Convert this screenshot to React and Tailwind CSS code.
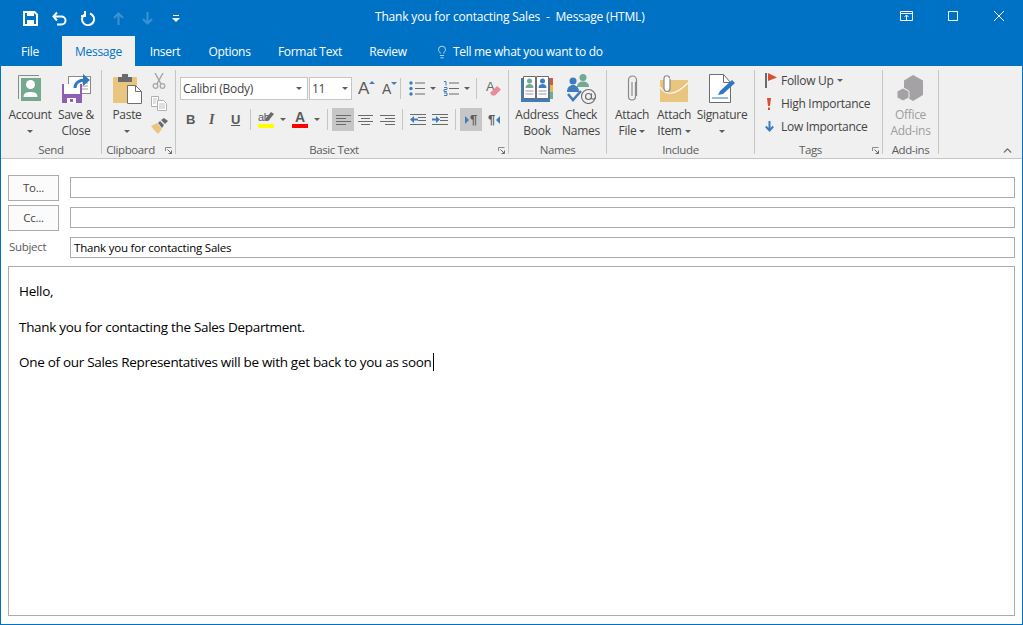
import { ChevronUp, Lightbulb } from "lucide-react";

const Caret = ({ className = "" }) => (
  <svg width="6" height="3" viewBox="0 0 6 3" className={`shrink-0 ${className}`}>
    <path d="M0 0h6L3 3z" fill="#5e5e5e" />
  </svg>
);

function Launcher() {
  return (
    <svg width="7" height="7" viewBox="0 0 7 7" className="absolute right-[3px] bottom-0">
      <path d="M.5 4V.5H6.500" fill="none" stroke="#8a8a8a" />
      <path d="M2.500 2.500l4 4M6.500 3.500v3h-3" fill="none" stroke="#6a6a6a" />
    </svg>
  );
}

function Group({ className, contentClass = "justify-center", labelClass = "", label, launcher, children }) {
  return (
    <div className={`relative flex h-[84px] shrink-0 flex-col border-r border-[#c6c6c6] ${className}`}>
      <div className={`flex h-[74px] shrink-0 items-start ${contentClass}`}>{children}</div>
      <div className={`flex h-[12px] shrink-0 items-center justify-center text-[11.5px] leading-none tracking-[-0.4px] text-[#5c5c5c] ${labelClass}`}>{label}</div>
      {launcher && <Launcher />}
    </div>
  );
}

function LargeButton({ className, icon, lines, caret, caretInline, disabled }) {
  return (
    <div className={`flex shrink-0 flex-col items-center ${disabled ? "text-[#9d9d9d]" : "text-[#444444]"} ${className}`}>
      <div className="flex h-[37px] w-full items-center justify-center">{icon}</div>
      <div className="whitespace-nowrap text-center text-[12px] leading-[16px]">{lines[0]}</div>
      <div className="flex h-[16px] items-center justify-center gap-[3px] whitespace-nowrap text-[12px] leading-[16px]">
        {lines[1]}
        {caretInline && <Caret />}
        {caret && <Caret />}
      </div>
    </div>
  );
}

const AccountIcon = () => (
  <svg width="24" height="27" viewBox="0 0 24 27">
    <path d="M.5 24V.5H21" fill="none" stroke="#8b8b8b" />
    <rect x="3" y="3" width="20" height="23" fill="#75a890" />
    <circle cx="12.500" cy="9.500" r="4.500" fill="#fff" />
    <path d="M5.500 22c0-4 3-5 7-5s7 1 7 5z" fill="#fff" />
  </svg>
);

const SaveCloseIcon = () => (
  <svg width="29" height="29" viewBox="0 0 29 29">
    <rect x="6.500" y="2.500" width="22" height="17" fill="#fff" stroke="#8b8b8b" />
    <path d="M20 9h6M20 12h6M20 15h6" stroke="#a0a0a0" />
    <rect x="0" y="10" width="20" height="19" fill="#8e5fb3" />
    <rect x="2" y="10" width="16" height="10" fill="#fff" />
    <rect x="5" y="24" width="9" height="5" fill="#fff" />
    <rect x="8" y="25" width="3" height="3" fill="#8e5fb3" />
    <path d="M13 14c0-5 4-8 10-8" fill="none" stroke="#2f78bd" strokeWidth="3" />
    <path d="M21 0l7 6-7 6z" fill="#2f78bd" />
  </svg>
);

const PasteIcon = () => (
  <svg width="29" height="30" viewBox="0 0 29 30">
    <path d="M1 3h22a1 1 0 0 1 1 1v25H1a1 1 0 0 1-1-1V4a1 1 0 0 1 1-1z" fill="#eac57f" />
    <path d="M5 3h14v5H5z" fill="#6b6b6b" />
    <rect x="9" y="0" width="6" height="5" fill="#6b6b6b" />
    <path d="M14.500 11.500h8l6 6v12h-14z" fill="#fff" stroke="#6f6f6f" />
    <path d="M22.500 11.500v6h6" fill="none" stroke="#6f6f6f" />
  </svg>
);

const CutIcon = () => (
  <svg width="14" height="16" viewBox="0 0 14 16">
    <path d="M3 0l6 11M11 0L5 11" stroke="#a8a8a8" strokeWidth="1.500" />
    <circle cx="3.500" cy="13" r="2.300" fill="none" stroke="#a8a8a8" strokeWidth="1.300" />
    <circle cx="10.500" cy="13" r="2.300" fill="none" stroke="#a8a8a8" strokeWidth="1.300" />
  </svg>
);

const CopyIcon = () => (
  <svg width="16" height="15" viewBox="0 0 16 15">
    <path d="M.5.5h7v10h-7z" fill="#fff" stroke="#b0b0b0" />
    <path d="M6.500 4.500h6l3 3v7h-9z" fill="#fff" stroke="#b0b0b0" />
    <path d="M8 8h6M8 10h6M8 12h6M2 3h4M2 5h3M2 7h3" stroke="#c0c0c0" />
  </svg>
);

const PainterIcon = () => (
  <svg width="17" height="16" viewBox="0 0 17 16">
    <path d="M0 8l6-3 5 6-4 5c-2-2-5-5-7-8z" fill="#eac57f" />
    <path d="M7 5l2-2 4 4-2 3z" fill="#6b6b6b" />
    <path d="M10 2l3-2 4 3-3 3z" fill="#6b6b6b" />
  </svg>
);

const AddressBookIcon = () => (
  <svg width="32" height="28" viewBox="0 0 32 28">
    <rect x="29" y="3" width="3" height="7" fill="#d9593d" />
    <rect x="29" y="10" width="3" height="7" fill="#eab54b" />
    <rect x="29" y="17" width="3" height="7" fill="#75a890" />
    <path d="M0 3h29v24H0z" fill="#3f7cbd" />
    <path d="M2.500 1.500h12v22h-12zM15.500 1.500h12v22h-12z" fill="#fff" stroke="#6e6e6e" />
    <circle cx="8.500" cy="6" r="2.500" fill="#75a890" />
    <path d="M4.500 13c0-3 2-4 4-4s4 1 4 4z" fill="#75a890" />
    <circle cx="21.500" cy="6" r="2.500" fill="#3f7cbd" />
    <path d="M17.500 13c0-3 2-4 4-4s4 1 4 4z" fill="#3f7cbd" />
    <path d="M4.500 16h8M4.500 19h8M17.500 16h8M17.500 19h8" stroke="#9a9a9a" />
  </svg>
);

const CheckNamesIcon = () => (
  <svg width="31" height="30" viewBox="0 0 31 30">
    <circle cx="17" cy="3.500" r="3.500" fill="#75a890" />
    <path d="M11 13c0-4 3-5.500 6-5.500s6 1.500 6 5.500z" fill="#75a890" />
    <circle cx="7" cy="7" r="3.500" fill="#3f7cbd" />
    <path d="M1 18c0-5 3-7 6-7s6 2 6 7z" fill="#3f7cbd" />
    <path d="M2 20l5 6 8-9" fill="none" stroke="#3f7cbd" strokeWidth="2.500" />
    <circle cx="22.500" cy="22.500" r="7" fill="none" stroke="#6b6b6b" strokeWidth="1.100" />
    <circle cx="22.500" cy="22.500" r="3" fill="none" stroke="#6b6b6b" strokeWidth="1.100" />
    <path d="M25.500 19.500v4a1.700 1.700 0 0 0 3.500 0" fill="none" stroke="#6b6b6b" strokeWidth="1.100" />
  </svg>
);

const ClipIcon = () => (
  <svg width="11" height="27" viewBox="0 0 11 27">
    <path d="M8.500 7v14.500a3.500 3.500 0 0 1-7 0V5a4 4 0 0 1 8 0v16" fill="none" stroke="#8a8a8a" strokeWidth="1.200" />
    <path d="M5 7v14" stroke="#8a8a8a" strokeWidth="1.200" />
  </svg>
);

const AttachItemIcon = () => (
  <svg width="28" height="27" viewBox="0 0 28 27">
    <rect x="0" y="5" width="28" height="22" fill="#eac57f" />
    <path d="M0 12c6 8 14 10 28-4" fill="none" stroke="#fff" strokeWidth="1.200" />
    <path d="M10 4v9.500a3 3 0 0 1-6 0V3.500a2.700 2.700 0 0 1 5.500 0" fill="#fff" stroke="#8a8a8a" strokeWidth="1.200" />
  </svg>
);

const SignatureIcon = () => (
  <svg width="27" height="29" viewBox="0 0 27 29">
    <path d="M.5.5h14l7 8v20H.5z" fill="#fff" stroke="#6e6e6e" />
    <path d="M14.500.5v8h7" fill="none" stroke="#6e6e6e" />
    <path d="M3 24h16" stroke="#2f78bd" />
    <path d="M9 21l2-4L23 6l3 3-12 11z" fill="#2f78bd" />
  </svg>
);

const AddInsIcon = () => (
  <svg width="27" height="28" viewBox="0 0 27 28">
    <path d="M16 0l10 5.500V20l-10 6-5-3v-8l-4-2V5.500z" fill="#a4a2a4" />
    <path d="M6 13l6 3.200v6.600L6 26 0 22.800v-6.600z" fill="#a4a2a4" stroke="#f0f0f0" />
  </svg>
);

const FollowUpIcon = () => (
  <svg width="12" height="15" viewBox="0 0 12 15">
    <rect x="0" y="0" width="2" height="15" fill="#6b6b6b" />
    <path d="M3 0l9 4.500L3 8z" fill="#d4502f" />
  </svg>
);

const ImportanceIcon = () => (
  <svg width="4" height="12" viewBox="0 0 4 12">
    <path d="M0 0h4L3 8H1z" fill="#d4502f" />
    <rect x="1" y="9.500" width="2" height="2.500" fill="#d4502f" />
  </svg>
);

const LowIcon = () => (
  <svg width="9" height="11" viewBox="0 0 9 11">
    <path d="M4.500 0v9M.8 5.500l3.700 4 3.700-4" fill="none" stroke="#3f7cbd" strokeWidth="2" />
  </svg>
);

const alignPaths = {
  left: "M0 .5h15M0 3.500h10M0 6.500h15M0 9.500h10",
  center: "M0 .5h15M3 3.500h9M0 6.500h15M3 9.500h9",
  right: "M0 .5h15M5 3.500h10M0 6.500h15M5 9.500h10",
};

const Lines = ({ align }) => (
  <svg width="15" height="10" viewBox="0 0 15 10">
    <path d={alignPaths[align]} stroke="#6a6a6a" />
  </svg>
);

const Indent = ({ flip }) => (
  <svg width="16" height="12" viewBox="0 0 16 12" className="shrink-0">
    <path d="M0 .5h16M8 3.500h8M8 6.500h8M0 10.500h16" stroke="#6a6a6a" />
    <path d={flip ? "M0 4.500h4V2l4 3.500L4 9V6.500H0z" : "M8 4.500H4V2L0 5.500 4 9V6.500h4z"} fill="#3f7cbd" />
  </svg>
);

const Bullets = () => (
  <svg width="16" height="15" viewBox="0 0 16 15" className="ml-[8px] shrink-0">
    <circle cx="2" cy="2" r="1.700" fill="#3f7cbd" />
    <circle cx="2" cy="7.500" r="1.700" fill="#3f7cbd" />
    <circle cx="2" cy="13" r="1.700" fill="#3f7cbd" />
    <path d="M6 2h10M6 7.500h10M6 13h10" stroke="#6a6a6a" />
  </svg>
);

const Numbers = () => (
  <svg width="16" height="15" viewBox="0 0 16 15" className="ml-[7px] shrink-0">
    <path d="M1 .5h2v4M1 6.500h3v2H1v2h3M1 12h3v2.500H1" fill="none" stroke="#3f7cbd" />
    <path d="M6 2h10M6 7.500h10M6 13h10" stroke="#6a6a6a" />
  </svg>
);

const Sep = ({ className = "" }) => <div className={`h-[21px] w-[1px] shrink-0 bg-[#c6c6c6] ${className}`} />;

function BasicText() {
  return (
    <div className="flex w-[328px] flex-col gap-[8px] pt-[7px] text-[#444444]">
      <div className="flex h-[23px] items-center">
        <div className="flex h-[23px] w-[128px] shrink-0 items-center justify-between border border-[#c6c6c6] bg-white pl-[2px] pr-[5px] text-[12px]">
          Calibri (Body)
          <Caret />
        </div>
        <div className="ml-[1px] flex h-[23px] w-[43px] shrink-0 items-center justify-between border border-[#c6c6c6] bg-white pl-[2px] pr-[3px] text-[12px]">
          11
          <Caret />
        </div>
        <div className="ml-[6px] w-[24px] shrink-0 font-['Liberation_Sans',sans-serif] text-[#5a5a5a]">
          <span className="relative text-[17px] leading-none">A<span className="absolute -right-[6px] top-[2px] h-0 w-0 border-x-[3px] border-b-[3px] border-x-transparent border-b-[#3f7cbd]" /></span>
        </div>
        <div className="w-[18px] shrink-0 font-['Liberation_Sans',sans-serif] text-[#5a5a5a]">
          <span className="relative text-[14px] leading-none">A<span className="absolute -right-[6px] top-[1px] h-0 w-0 border-x-[3px] border-t-[3px] border-x-transparent border-t-[#3f7cbd]" /></span>
        </div>
        <Sep />
        <Bullets />
        <Caret className="ml-[5px]" />
        <Numbers />
        <Caret className="ml-[5px]" />
        <Sep className="ml-[6px]" />
        <svg width="15" height="17" viewBox="0 0 15 17" className="ml-[9px] shrink-0">
          <text x="0" y="11" fontSize="13" fill="#6a6a6a" fontFamily="Liberation Sans">A</text>
          <path d="M4 13l7-7 4 3.500-6 6H6z" fill="#ea8a9a" />
        </svg>
      </div>
      <div className="flex h-[23px] items-center">
        <span className="ml-[6px] w-[23px] shrink-0 font-['Liberation_Sans',sans-serif] text-[13px] font-bold text-[#5a5a5a]">B</span>
        <span className="w-[22px] shrink-0 font-['Liberation_Serif',serif] text-[14px] font-bold italic text-[#5a5a5a]">I</span>
        <span className="w-[19px] shrink-0 font-['Liberation_Sans',sans-serif] text-[13px] font-bold text-[#5a5a5a] underline">U</span>
        <Sep />
        <div className="relative ml-[7px] flex w-[16px] shrink-0 flex-col">
          <span className="h-[11px] font-['Liberation_Sans',sans-serif] text-[11px] leading-[10px] text-[#5a5a5a]">ab</span>
          <svg width="9" height="11" viewBox="0 0 9 11" className="absolute -top-[1px] right-0">
            <path d="M0 10l1-3 5-6 3 2-5 6z" fill="#6a6a6a" />
          </svg>
          <div className="mt-[1px] h-[4px] w-[16px] bg-[#ffff00]" />
        </div>
        <Caret className="ml-[6px]" />
        <div className="ml-[6px] flex w-[16px] shrink-0 flex-col items-center">
          <span className="h-[11px] font-['Liberation_Sans',sans-serif] text-[14px] font-bold leading-[11px] text-[#5a5a5a]">A</span>
          <div className="mt-[1px] h-[4px] w-[16px] bg-[#ff0000]" />
        </div>
        <Caret className="ml-[6px]" />
        <Sep className="ml-[7px]" />
        <div className="ml-[4px] flex h-[23px] w-[22px] shrink-0 items-center justify-center bg-[#c6c6c6]"><Lines align="left" /></div>
        <div className="flex h-[23px] w-[22px] shrink-0 items-center justify-center"><Lines align="center" /></div>
        <div className="flex h-[23px] w-[22px] shrink-0 items-center justify-center"><Lines align="right" /></div>
        <Sep className="ml-[4px]" />
        <div className="ml-[7px] flex shrink-0 gap-[6px]"><Indent /><Indent flip /></div>
        <Sep className="ml-[7px]" />
        <div className="ml-[4px] flex h-[23px] w-[22px] shrink-0 items-center justify-center bg-[#c6c6c6] font-['Liberation_Sans',sans-serif] text-[13px] font-bold text-[#5a5a5a]">
          <span className="mr-[1px] h-0 w-0 border-y-[4px] border-l-[4px] border-y-transparent border-l-[#3f7cbd]" />¶
        </div>
        <div className="ml-[3px] flex h-[23px] w-[18px] shrink-0 items-center justify-center font-['Liberation_Sans',sans-serif] text-[13px] font-bold text-[#5a5a5a]">
          ¶<span className="ml-[1px] h-0 w-0 border-y-[4px] border-r-[4px] border-y-transparent border-r-[#3f7cbd]" />
        </div>
      </div>
    </div>
  );
}

function SmallTag({ icon, iconClass, label, caret }) {
  return (
    <div className="flex h-[23px] items-center text-[12px] text-[#444444]">
      <div className={`flex w-[26px] shrink-0 ${iconClass}`}>{icon}</div>
      <span className="whitespace-nowrap">{label}</span>
      {caret && <Caret className="ml-[3px]" />}
    </div>
  );
}

function Field({ value }) {
  return (
    <div className="flex h-[21px] flex-1 items-center border border-[#ababab] bg-white pl-[3px] text-[11.5px] tracking-[-0.2px] text-black">{value}</div>
  );
}

function AddressButton({ label }) {
  return (
    <button className="flex h-[26px] w-[51px] shrink-0 items-center justify-center border border-[#ababab] bg-[#fbfbfb] text-[11.5px] text-[#444444]">{label}</button>
  );
}

export default function App() {
  return (
    <div className="flex h-[625px] w-[1023px] flex-col overflow-hidden bg-[#0072c6] font-['Open_Sans',sans-serif] tracking-[-0.3px]">
      {/* title bar */}
      <div className="relative flex h-[36px] shrink-0 items-center text-white">
        <div className="flex items-center pl-[23px]">
          <svg width="15" height="15" viewBox="0 0 15 15">
            <path d="M1 1h10.500L14 3.500V14H1z" fill="none" stroke="#fff" strokeWidth="2" />
            <rect x="4" y="1" width="7" height="4" fill="#fff" />
            <rect x="4" y="9" width="7" height="5" fill="#fff" />
          </svg>
          <svg width="15" height="15" viewBox="0 0 15 15" className="ml-[14px]">
            <path d="M1.500 5.500h8a4 4 0 0 1 0 8H5M5 1.500L1.500 5.500 5 9.500" fill="none" stroke="#fff" strokeWidth="2" />
          </svg>
          <svg width="15" height="15" viewBox="0 0 15 15" className="ml-[14px]">
            <path d="M9 2.500A6 6 0 1 1 4 3M4 0v5H0" fill="none" stroke="#fff" strokeWidth="2" />
          </svg>
          <svg width="11" height="13" viewBox="0 0 11 13" className="ml-[17px]">
            <path d="M5.500 13V2M1 6l4.500-4.500L10 6" fill="none" stroke="#3b92d3" strokeWidth="2" />
          </svg>
          <svg width="11" height="13" viewBox="0 0 11 13" className="ml-[18px]">
            <path d="M5.500 0v11M1 7l4.500 4.500L10 7" fill="none" stroke="#3b92d3" strokeWidth="2" />
          </svg>
          <svg width="8" height="7" viewBox="0 0 8 7" className="ml-[19px]">
            <path d="M1 .5h6" stroke="#fff" />
            <path d="M0 3h8L4 7z" fill="#fff" />
          </svg>
        </div>
        <div className="absolute left-[375px] top-[9px] whitespace-pre text-[12px] leading-[16px] tracking-[-0.18px]">Thank you for contacting Sales  -  Message (HTML)</div>
        <div className="ml-auto -mt-[4px] flex items-center pr-[19px]">
          <svg width="13" height="10" viewBox="0 0 13 10">
            <path d="M.5.5h12v9H.5zM.5 2.500h12" fill="none" stroke="#fff" />
            <path d="M6.500 9V4M4.500 6l2-2 2 2" fill="none" stroke="#fff" />
          </svg>
          <svg width="10" height="10" viewBox="0 0 10 10" className="ml-[35px]">
            <path d="M.5.5h9v9h-9z" fill="none" stroke="#fff" />
          </svg>
          <svg width="10" height="10" viewBox="0 0 10 10" className="ml-[36px]">
            <path d="M0 0l10 10M10 0L0 10" fill="none" stroke="#fff" />
          </svg>
        </div>
      </div>
      {/* tabs */}
      <div className="flex h-[30px] shrink-0 items-end text-[12px] text-white">
        <div className="flex h-[30px] w-[62px] items-center justify-center pr-[2px] pt-[2px]">File</div>
        <div className="flex h-[30px] w-[73px] items-center justify-center bg-[#f0f0f0] pt-[2px] text-[#0072c6]">Message</div>
        <div className="flex h-[30px] w-[60px] items-center justify-center pt-[2px]">Insert</div>
        <div className="flex h-[30px] w-[69px] items-center justify-center pt-[2px]">Options</div>
        <div className="flex h-[30px] w-[92px] items-center justify-center pt-[2px]">Format Text</div>
        <div className="flex h-[30px] w-[64px] items-center justify-center pt-[2px]">Review</div>
        <div className="flex h-[30px] items-center pl-[15px] pt-[2px]">
          <Lightbulb size={14} strokeWidth={1.2} className="mr-[4px]" />
          Tell me what you want to do
        </div>
      </div>
      {/* ribbon */}
      <div className="mx-[1px] flex h-[93px] shrink-0 border-b border-[#c6c6c6] bg-[#f0f0f0] pt-[4px]">
        <Group className="w-[101px]" contentClass="justify-start pl-[2px]" label="Send">
          <LargeButton className="w-[54px]" icon={<AccountIcon />} lines={["Account"]} caret />
          <LargeButton className="w-[38px]" icon={<SaveCloseIcon />} lines={["Save &", "Close"]} />
        </Group>
        <Group className="w-[74px]" contentClass="justify-start pl-[2px]" labelClass="pr-[16px]" label="Clipboard" launcher>
          <LargeButton className="w-[46px]" icon={<PasteIcon />} lines={["Paste"]} caret />
          <div className="flex w-[18px] flex-col items-center gap-[7px] pt-[3px]">
            <CutIcon />
            <CopyIcon />
            <PainterIcon />
          </div>
        </Group>
        <Group className="w-[333px]" contentClass="justify-start pl-[4px]" labelClass="pr-[16px]" label="Basic Text" launcher>
          <BasicText />
        </Group>
        <Group className="w-[98px]" contentClass="justify-start pl-[6px]" label="Names">
          <LargeButton className="w-[44px]" icon={<AddressBookIcon />} lines={["Address", "Book"]} />
          <LargeButton className="w-[44px]" icon={<CheckNamesIcon />} lines={["Check", "Names"]} />
        </Group>
        <Group className="w-[148px]" contentClass="justify-start pl-[2px]" label="Include">
          <LargeButton className="w-[46px]" icon={<ClipIcon />} lines={["Attach", "File"]} caretInline />
          <LargeButton className="w-[38px]" icon={<AttachItemIcon />} lines={["Attach", "Item"]} caretInline />
          <LargeButton className="w-[58px]" icon={<SignatureIcon />} lines={["Signature"]} caret />
        </Group>
        <Group className="w-[128px]" labelClass="pr-[16px]" label="Tags" launcher>
          <div className="-mt-[1px] flex w-full flex-col">
            <SmallTag icon={<FollowUpIcon />} iconClass="pl-[10px]" label="Follow Up" caret />
            <SmallTag icon={<ImportanceIcon />} iconClass="pl-[12px]" label="High Importance" />
            <SmallTag icon={<LowIcon />} iconClass="pl-[10px]" label="Low Importance" />
          </div>
        </Group>
        <Group className="w-[56px]" label="Add-ins">
          <LargeButton className="w-[50px]" icon={<AddInsIcon />} lines={["Office", "Add-ins"]} disabled />
        </Group>
        <div className="flex flex-1 items-end justify-end pb-[1px] pr-[8px]">
          <ChevronUp size={13} strokeWidth={2.5} className="text-[#6a6a6a]" />
        </div>
      </div>
      {/* compose */}
      <div className="mx-[1px] mb-[1px] flex flex-1 flex-col gap-[4px] bg-white pb-[8px] pl-[7px] pr-[7px] pt-[16px]">
        <div className="flex h-[26px] items-start gap-[11px]">
          <AddressButton label="To..." />
          <div className="flex flex-1 pt-[2px]"><Field /></div>
        </div>
        <div className="flex h-[26px] items-start gap-[11px]">
          <AddressButton label="Cc..." />
          <div className="flex flex-1 pt-[2px]"><Field /></div>
        </div>
        <div className="mt-[2px] flex h-[21px] items-center gap-[11px]">
          <div className="w-[51px] shrink-0 pb-[2px] pl-[1px] text-[11.5px] text-[#5c5c5c]">Subject</div>
          <Field value="Thank you for contacting Sales" />
        </div>
        <div className="mt-[4px] flex-1 border border-[#ababab] pl-[10px] pt-[15px] text-[13.5px] leading-[18px] text-black">
          <p>Hello,</p>
          <p className="mt-[18px]">Thank you for contacting the Sales Department.</p>
          <p className="mt-[17px]">
            One of our Sales Representatives will be with get back to you as soon
            <span className="ml-[1px] inline-block h-[18px] w-[1px] bg-black align-top" />
          </p>
        </div>
      </div>
    </div>
  );
}
